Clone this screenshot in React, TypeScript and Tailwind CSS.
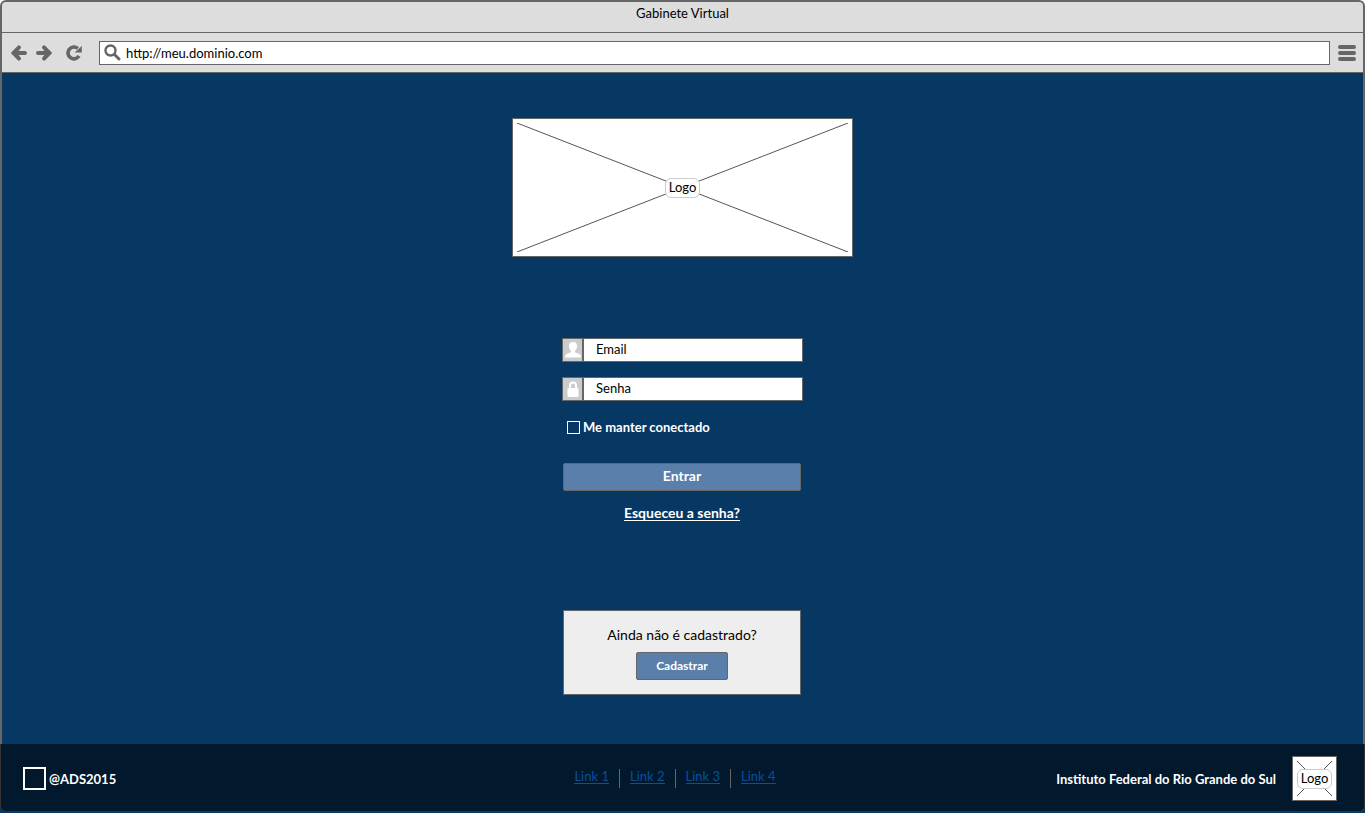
import React from "react";

function Arrow({ flip = false }: { flip?: boolean }) {
  return (
    <svg viewBox="0 0 16 16" className={flip ? "size-4 rotate-180" : "size-4"} aria-hidden="true">
      <path d="M.4 7.200 6.600.9Q7.800-.1 9 .8l.6.700q.9 1-.1 2.100L7.600 5.900H14q2 0 2 2.100t-2 2.100H7.600l1.900 2.300q1 1.100.1 2.100l-.6.700q-1.200.9-2.400-.1L.4 8.800Q-.2 8 .4 7.200Z" fill="#666" />
    </svg>
  );
}

function Placeholder({ className }: { className: string }) {
  return (
    <div className={`grid place-items-center border border-[#666] bg-white ${className}`}>
      <svg className="col-start-1 row-start-1 h-full w-full p-1" viewBox="0 0 100 100" preserveAspectRatio="none" aria-hidden="true">
        <path d="M0 0 100 100M100 0 0 100" stroke="#555" fill="none" vectorEffect="non-scaling-stroke" />
      </svg>
      <span className="z-10 col-start-1 row-start-1 rounded-md border border-[#ccc] bg-white/90 px-[3px] pb-0.5 text-[13px] leading-4 text-black">Logo</span>
    </div>
  );
}

function Field({ label, type, children }: { label: string; type: string; children: React.ReactNode }) {
  return (
    <label className="flex h-6 w-full border border-[#666] bg-white">
      <span className="flex w-[21px] shrink-0 items-center justify-center border-r-2 border-[#666] bg-[#ccc]">{children}</span>
      <input type={type} aria-label={label} placeholder={label} className="min-w-0 flex-1 bg-transparent px-3 pb-0.5 text-[13px] text-black outline-none placeholder:text-black" />
    </label>
  );
}

const links = ["Link 1", "Link 2", "Link 3", "Link 4"];

export default function App() {
  return (
    <div className="flex min-h-screen flex-col bg-[#073763] font-['Lato','Noto_Sans',sans-serif] text-[13px] leading-4 text-black">
      <div className="bg-white">
        <header className="rounded-t-md border-2 border-b-0 border-[#666] bg-[#ddd]">
          <h1 className="h-[31px] border-b border-[#666] pt-[3px] text-center">Gabinete Virtual</h1>
          <div className="flex h-10 items-center border-b border-[#666] pr-[7px] pl-[9px]">
            <button type="button" aria-label="Voltar" className="mr-[9px]"><Arrow /></button>
            <button type="button" aria-label="Avançar" className="mr-[13px]"><Arrow flip /></button>
            <button type="button" aria-label="Recarregar" className="mr-4">
              <svg viewBox="0 0 18 16" className="h-4 w-[18px]" aria-hidden="true">
                <path d="M12.800 3.500A5.900 5.900 0 1 0 14 10.900" fill="none" stroke="#666" strokeWidth="3.600" />
                <path d="M16.800 1V7.500H9.600Z" fill="#666" />
              </svg>
            </button>
            <label className="flex h-6 flex-1 items-center gap-[5px] border border-[#666] bg-white pl-1">
              <svg viewBox="0 0 17 17" className="size-[17px]" aria-hidden="true">
                <circle cx="6.500" cy="6.500" r="5" fill="none" stroke="#666" strokeWidth="2.400" />
                <path d="m10.500 10.500 4.500 4.500" stroke="#666" strokeWidth="3" strokeLinecap="round" />
              </svg>
              <input type="text" aria-label="Endereço" defaultValue="http://meu.dominio.com" className="min-w-0 flex-1 outline-none" />
            </label>
            <button type="button" aria-label="Menu" className="ml-2">
              <svg viewBox="0 0 18 16" className="h-4 w-[18px]" aria-hidden="true">
                <path d="M2 2h14M2 8h14M2 14h14" stroke="#666" strokeWidth="4" strokeLinecap="round" />
              </svg>
            </button>
          </div>
        </header>
      </div>

      <main className="flex flex-1 flex-col items-center border-x-2 border-[#666] pt-[45px] pb-12">
        <Placeholder className="h-[139px] w-[341px]" />
        <div className="mt-[81px] w-[241px]">
          <form className="flex flex-col" onSubmit={(e) => e.preventDefault()}>
            <div className="flex flex-col gap-[15px]">
              <Field label="Email" type="email">
                <svg viewBox="0 0 16 16" className="size-4" aria-hidden="true">
                  <path d="M8 0C5 0 3.800 2 4 4.500c.1 2 .8 3.300 2 4.300v1.400L1.500 12Q0 12.700 0 15.500h16Q16 12.700 14.500 12L10 10.200V8.800c1.200-1 1.900-2.300 2-4.300C12.200 2 11 0 8 0Z" fill="#fff" />
                </svg>
              </Field>
              <Field label="Senha" type="password">
                <svg viewBox="0 0 12 16" className="h-4 w-3" aria-hidden="true">
                  <path d="M3 8V4.500a3 3 0 0 1 6 0V8" fill="none" stroke="#fff" strokeWidth="2" />
                  <rect x=".5" y="7" width="11" height="9" rx="1" fill="#fff" />
                </svg>
              </Field>
            </div>
            <label className="mt-[18px] flex items-center gap-[3px] self-start pl-[5px] font-bold text-white">
              <input type="checkbox" className="size-[13px] appearance-none border border-white checked:bg-white" />
              Me manter conectado
            </label>
            <div className="mt-7 ml-px flex w-[238px] flex-col items-center">
              <button type="submit" className="h-7 w-full rounded-xs border border-[#666] bg-[#5b7fab] pb-0.5 text-sm font-bold text-white">Entrar</button>
              <a href="#senha" className="mt-[14px] border-b border-white text-sm leading-[15px] font-bold text-white">Esqueceu a senha?</a>
            </div>
          </form>
          <section className="mt-[89px] ml-px flex h-[85px] w-[238px] flex-col items-center border border-[#666] bg-[#eee] pt-4">
            <p className="text-sm leading-4">Ainda não é cadastrado?</p>
            <button type="button" className="mt-[9px] h-7 w-[92px] rounded-xs border border-[#666] bg-[#5b7fab] text-xs font-bold text-white">Cadastrar</button>
          </section>
        </div>
      </main>

      <footer className="mb-px grid h-[68px] grid-cols-[1fr_auto_1fr] items-center rounded-b-md border border-t-0 border-[#333] bg-[#02182d] pt-0.5 pr-[27px] pl-[22px] font-bold text-white">
        <div className="flex items-center gap-[3px]">
          <span className="size-[23px] border-2 border-white" />
          <span>@ADS2015</span>
        </div>
        <ul className="flex font-normal text-[#04529c]">
          {links.map((l) => (
            <li key={l} className="border-l border-[#666] px-[10px] pb-1 first:border-0 first:pl-0">
              <a href="#links" className="block border-b border-[#04529c] leading-[14px]">{l}</a>
            </li>
          ))}
        </ul>
        <div className="flex items-center gap-4 justify-self-end">
          <span>Instituto Federal do Rio Grande do Sul</span>
          <Placeholder className="size-[45px] font-normal" />
        </div>
      </footer>
    </div>
  );
}
